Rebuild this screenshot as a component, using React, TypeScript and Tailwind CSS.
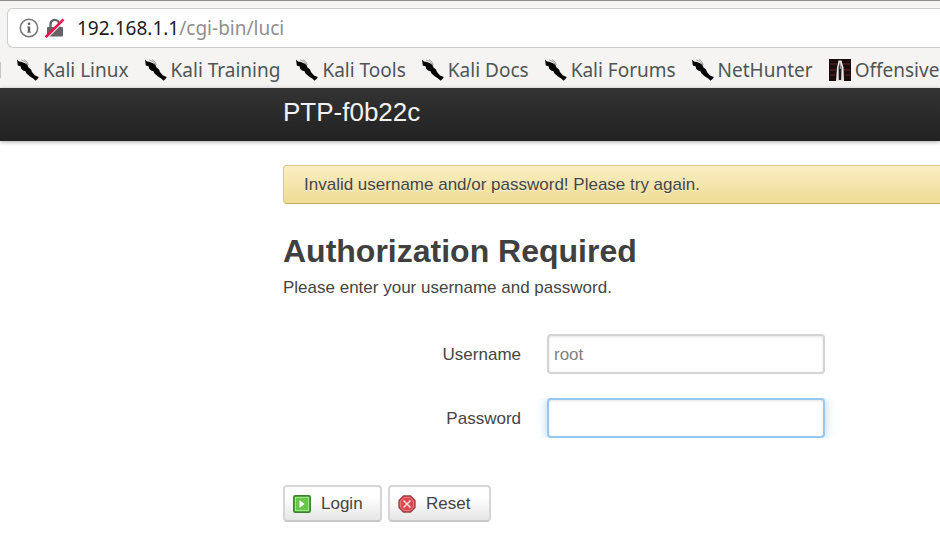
import React from 'react'

const bookmarks = [
  'Kali Linux',
  'Kali Training',
  'Kali Tools',
  'Kali Docs',
  'Kali Forums',
  'NetHunter',
]

const InfoIcon = () => (
  <svg width="20" height="20" viewBox="0 0 20 20" fill="none" aria-hidden="true">
    <circle cx="10" cy="10" r="8.7" stroke="#777" strokeWidth="1.5" />
    <circle cx="10" cy="5.8" r="1.4" fill="#5e5e5e" />
    <path d="M10 8.5v6" stroke="#5e5e5e" strokeWidth="2.4" />
    <path d="M8 9h2M8 14.2h4.2" stroke="#8a8a8a" strokeWidth="1" />
  </svg>
)

const InsecureIcon = () => (
  <svg width="20" height="20" viewBox="0 0 20 20" aria-hidden="true">
    <path d="M5.5 10V6.2a4.3 4.3 0 0 1 8.6 0V10" fill="none" stroke="#636363" strokeWidth="2.4" />
    <rect x="2" y="9" width="16" height="9.5" rx="1" fill="#636363" />
    <path d="M2.2 20L19.2 3" stroke="#fff" strokeWidth="1.2" />
    <path d="M.8 19L18.500 1.3" stroke="#f5124c" strokeWidth="2.6" />
  </svg>
)

const KnifeIcon = () => (
  <svg className="shrink-0" width="22" height="22" viewBox="0 0 22 22" aria-hidden="true">
    <path
      d="M0 .5L2 2.500L5 3L8.500 4.500L10.500 6L11.500 8.500L14 10.500L15 13L18 16.500L21.800 18L20.500 20L18.500 21.800L16.500 19.800L13 17.500L9.500 14.500L8.500 12.200L6 11.500L4 9.500L3.800 7.500L.8 6.500Z"
      fill="#060606"
    />
    <path d="M4 .8Q8 1.500 10.500 5.500M7 .5Q10 2 11.500 6" fill="none" stroke="#8d8d8d" strokeWidth=".8" />
  </svg>
)

const OffensiveIcon = () => (
  <svg className="shrink-0" width="22" height="22" viewBox="0 0 22 22" aria-hidden="true">
    <path d="M0 0h22v22H0z" fill="#1c0b0b" />
    <path d="M1 5h7M1 11h6M1 16h5M14 5h7M15 11h6M16 16h5" stroke="#4a2220" strokeWidth="1.5" />
    <path d="M9.500 1.500h3l2 7 .5 13.500H7l1-13.500z" fill="#e8e4e2" />
    <path d="M11 3l1.500 5-.3 13H9.800L9.600 8z" fill="#17171a" />
    <path d="M10.800 3h.8v7h-.8z" fill="#e8e4e2" />
  </svg>
)

const LoginIcon = () => (
  <svg width="18" height="18" viewBox="0 0 18 18" aria-hidden="true">
    <rect x=".8" y=".8" width="16.4" height="16.4" rx="1.5" fill="#66c748" stroke="#3c7d2f" strokeWidth="1.5" />
    <rect x="2.5" y="2.5" width="13" height="13" fill="none" stroke="#a2e68a" />
    <path d="M6.500 5L11.500 9L6.500 13Z" fill="#fff" />
  </svg>
)

const ResetIcon = () => (
  <svg width="18" height="18" viewBox="0 0 18 18" aria-hidden="true">
    <path d="M5.500 1h7L17 5.500v7L12.500 17h-7L1 12.500v-7z" fill="#dc4a4f" stroke="#9c3c3f" strokeWidth="1.3" />
    <path d="M6 2.400h6L15.600 6v6L12 15.600H6L2.400 12V6z" fill="none" stroke="#ef8b8b" strokeWidth=".8" />
    <path d="M5.500 5.500l7 7M12.500 5.500l-7 7" stroke="#ffdede" strokeWidth="1.5" />
  </svg>
)

const buttonClass =
  'flex h-[37px] items-center gap-2.5 rounded border-2 border-[#d6d6d6] border-b-[#c8c8c8] bg-gradient-to-b from-white from-30% to-[#e6e6e6] px-2 text-[17px] text-[#444]'

const inputClass =
  'ml-[26px] h-10 w-[278px] rounded border-2 bg-white px-[5px] pt-0.5 text-[17px] text-[#808080] outline-none'

const labelClass = 'w-[238px] pt-0.5 text-right'

const App: React.FC = () => {
  return (
    <div className="min-h-screen bg-white font-['Liberation_Sans',Arial,sans-serif] text-[17px] text-[#454545]">
      {/* Browser chrome */}
      <div className="overflow-hidden border-t border-[#8c8c8c] bg-[#f5f4f3] font-['Noto_Sans',sans-serif]">
        <div className="mt-[7px] ml-[7px] flex h-10 items-center rounded-l-md border border-r-0 border-[#cfcdc9] bg-white pl-[11px]">
          <InfoIcon />
          <span className="ml-1.5">
            <InsecureIcon />
          </span>
          <span className="ml-3 text-[19px] text-[#8f8f8f]">
            <span className="text-[#1c1c1c]">192.168.1.1</span>/cgi-bin/luci
          </span>
        </div>
        <nav className="flex h-10 items-center gap-4 pt-1 whitespace-nowrap text-[19px] text-[#4f5557]">
          <span className="-mr-4 h-4 w-px bg-[#c4c4c4]" />
          {bookmarks.map((name) => (
            <a key={name} href="#" className="flex items-center gap-1 first-of-type:ml-4">
              <KnifeIcon />
              {name}
            </a>
          ))}
          <a href="#" className="flex items-center gap-1">
            <OffensiveIcon />
            Offensive
          </a>
        </nav>
      </div>

      {/* Page header */}
      <header className="h-[53px] bg-gradient-to-b from-[#333] to-[#222] pl-[283px] shadow-[0_1px_4px_rgba(0,0,0,0.35)]">
        <a href="#" className="text-[26px] leading-[48px] text-[#f2f2f2]">
          PTP-f0b22c
        </a>
      </header>

      <main className="pt-6 pl-[283px]">
        <div
          role="alert"
          className="flex h-[39px] items-center rounded-l border border-r-0 border-[#dccb84] border-b-[#bfae68] bg-gradient-to-b from-[#fbeec3] to-[#eedc94] pl-5 [text-shadow:0_1px_0_rgba(255,255,255,0.5)]"
        >
          Invalid username and/or password! Please try again.
        </div>

        <h1 className="mt-[27px] text-[32px] leading-10 font-bold text-[#404040]">Authorization Required</h1>
        <p className="mt-[5px] leading-6">Please enter your username and password.</p>

        <form onSubmit={(e) => e.preventDefault()}>
          <div className="mt-[34px] flex items-center overflow-hidden">
            <label htmlFor="username" className={labelClass}>
              Username
            </label>
            <input
              id="username"
              type="text"
              defaultValue="root"
              className={`${inputClass} border-[#d4d4d4] shadow-[inset_0_1px_3px_rgba(0,0,0,0.1)]`}
            />
          </div>
          <div className="mt-6 flex items-center overflow-hidden">
            <label htmlFor="password" className={labelClass}>
              Password
            </label>
            <input
              id="password"
              type="password"
              className={`${inputClass} border-[#94c9f3] shadow-[inset_0_1px_3px_rgba(0,0,0,0.1),0_0_10px_rgba(82,168,236,0.5)]`}
            />
          </div>
          <div className="mt-[47px] flex gap-1.5">
            <button type="submit" className={`${buttonClass} w-[99px]`}>
              <LoginIcon />
              Login
            </button>
            <button type="reset" className={`${buttonClass} w-[103px]`}>
              <ResetIcon />
              Reset
            </button>
          </div>
        </form>
      </main>
    </div>
  )
}

export default App
